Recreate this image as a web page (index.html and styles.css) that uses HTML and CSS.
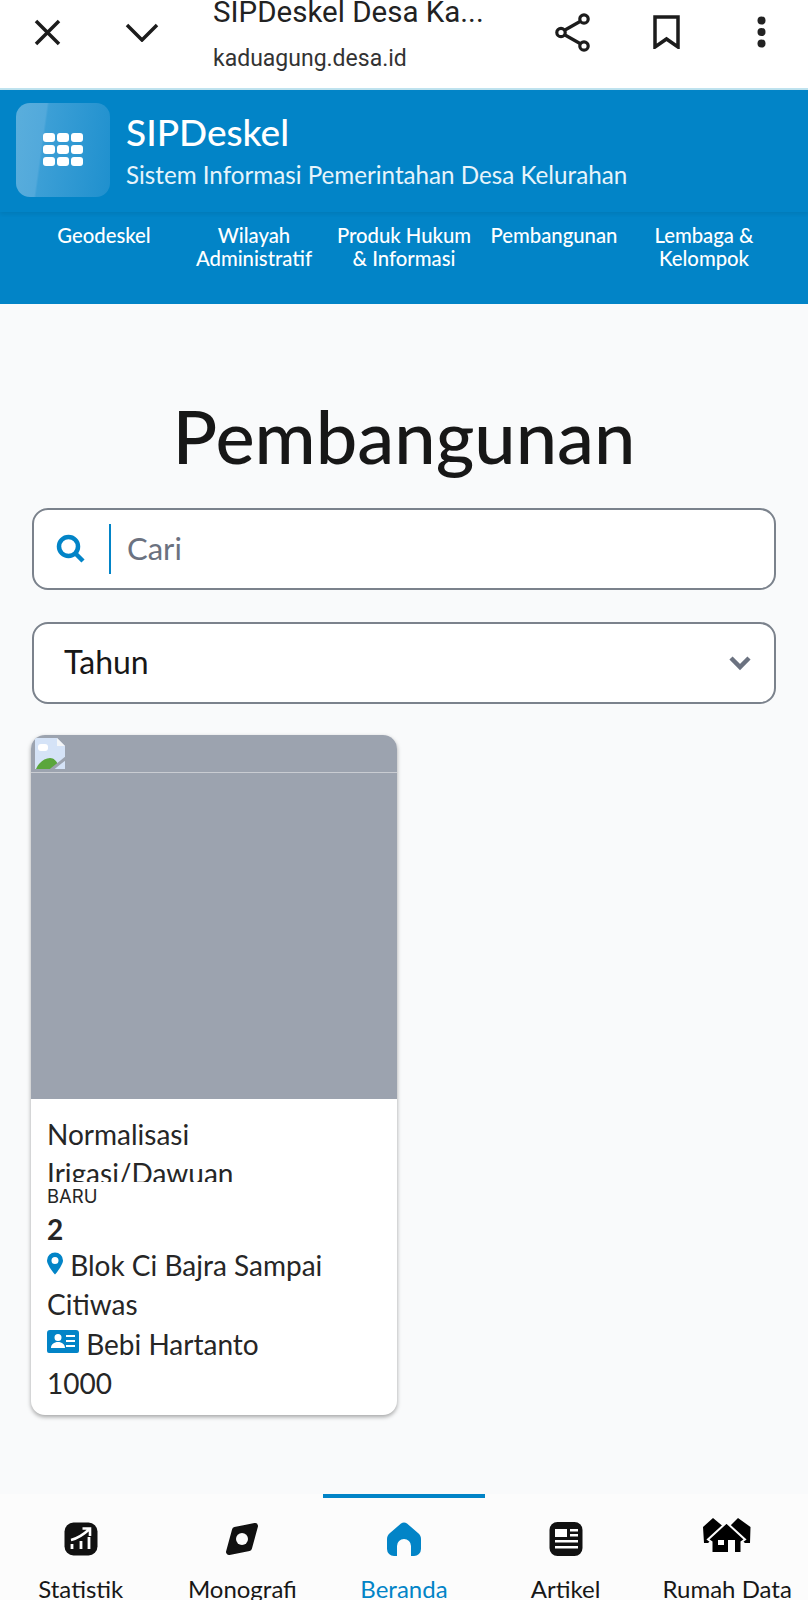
FILE: index.html
```html
<!DOCTYPE html>
<html lang="id">
<head>
    <meta charset="UTF-8">
    <meta name="viewport" content="width=device-width, initial-scale=1.0">
    <title>SIPDeskel - Pembangunan</title>
    <link rel="stylesheet" href="styles.css">
</head>
<body>
    <div class="screen">
        <div class="browser-bar">
            <svg class="bar-icon close-icon" viewBox="0 0 27 27"><path d="M2 2 25 25M25 2 2 25"/></svg>
            <svg class="bar-icon chevron-icon" viewBox="0 0 34 20"><path d="M2 3 17 18 32 3"/></svg>
            <div class="bar-title">
                <div class="bar-name">SIPDeskel Desa Ka...</div>
                <div class="bar-url">kaduagung.desa.id</div>
            </div>
            <svg class="bar-icon share-icon" viewBox="0 0 35 39"><circle cx="6" cy="19.500" r="4.200"/><circle cx="29" cy="6" r="4.200"/><circle cx="29" cy="33" r="4.200"/><path d="M10 17 25 8.500M10 22 25 30.500"/></svg>
            <svg class="bar-icon bookmark-icon" viewBox="0 0 27 34"><path d="M2 2H25V32L13.500 24 2 32Z"/></svg>
            <svg class="dots-icon" viewBox="0 0 9 32"><circle cx="4.500" cy="4.500" r="4"/><circle cx="4.500" cy="16" r="4"/><circle cx="4.500" cy="27.500" r="4"/></svg>
        </div>

        <div class="header">
            <div class="brand">
                <div class="logo">
                    <div class="logo-grid">
                        <span></span><span></span><span></span>
                        <span></span><span></span><span></span>
                        <span></span><span></span><span></span>
                    </div>
                </div>
                <div>
                    <div class="brand-name">SIPDeskel</div>
                    <div class="brand-sub">Sistem Informasi Pemerintahan Desa Kelurahan</div>
                </div>
            </div>
            <div class="menu">
                <div class="menu-item">Geodeskel</div>
                <div class="menu-item">Wilayah Administratif</div>
                <div class="menu-item">Produk Hukum &amp; Informasi</div>
                <div class="menu-item">Pembangunan</div>
                <div class="menu-item">Lembaga &amp; Kelompok</div>
            </div>
        </div>

        <div class="main">
            <h1>Pembangunan</h1>
            <div class="field search">
                <svg class="search-icon" viewBox="0 0 30 30"><circle cx="12.500" cy="12.500" r="9.500"/><path d="M19.500 19.500 27 27"/></svg>
                <span class="search-text">Cari</span>
            </div>
            <div class="field select">
                <span class="select-text">Tahun</span>
                <svg class="select-arrow" viewBox="0 0 24 16"><path d="M3 3 12 12 21 3"/></svg>
            </div>

            <div class="card">
                <div class="card-image">
                    <svg class="broken-image" viewBox="0 0 32 31">
                        <path d="M1 0H23L31 8V31H1Z" fill="#d5e3f7"/>
                        <path d="M23 0 31 8H23Z" fill="#f4f6f8"/>
                        <rect x="4" y="6" width="10" height="7" rx="3" fill="#fff"/>
                        <path d="M2 31C5 24 11 20 16 20 20 20 22 23 24 26L19 31Z" fill="#5aa63c"/>
                        <path d="M32 20 17 32" stroke="#9ca3af" stroke-width="3"/>
                    </svg>
                </div>
                <div class="card-body">
                    <div class="card-title">Normalisasi<br>Irigasi/Dawuan</div>
                    <div class="card-status">BARU</div>
                    <div class="card-count">2</div>
                    <div class="card-line">
                        <svg class="pin-icon" viewBox="0 0 16 22"><path fill-rule="evenodd" d="M8 0a8 8 0 0 0-8 8c0 3.500 4.500 10 8 14 3.500-4 8-10.500 8-14a8 8 0 0 0-8-8Zm0 4.500a3.500 3.500 0 1 1 0 7 3.500 3.500 0 0 1 0-7Z"/></svg>
                        Blok Ci Bajra Sampai Citiwas
                    </div>
                    <div class="card-line card-owner">
                        <svg class="id-icon" viewBox="0 0 32 24"><path fill-rule="evenodd" d="M3 0H29a3 3 0 0 1 3 3V21a2 2 0 0 1-2 2H2a2 2 0 0 1-2-2V3a3 3 0 0 1 3-3Zm8 4a3.500 3.500 0 1 0 0 7 3.500 3.500 0 0 0 0-7ZM4 18h14c0-3.500-3-6-7-6s-7 2.500-7 6ZM19 5v2h9V5Zm0 5v2h9v-2Zm0 5v2h9v-2Z"/></svg>
                        Bebi Hartanto
                    </div>
                    <div class="card-line">1000</div>
                </div>
            </div>
        </div>

        <div class="bottom-nav">
            <div class="nav-item">
                <svg class="nav-icon" viewBox="0 0 34 34"><rect x="0.500" y="0.500" width="33" height="33" rx="9" fill="#111"/><path d="M7 18C13 16.500 19 13 25 7.500M18.500 6.500H26V14" fill="none" stroke="#fff" stroke-width="2.600"/><path d="M8 27V22M17 27V19M25 27V15" stroke="#fff" stroke-width="2.800"/></svg>
                <span>Statistik</span>
            </div>
            <div class="nav-item">
                <svg class="nav-icon" viewBox="0 0 34 34"><path fill="#111" stroke="#111" stroke-width="6" stroke-linejoin="round" d="M10 8 30 4 24 26 4 30Z"/><circle cx="17" cy="17" r="6" fill="#fcfcfc"/></svg>
                <span>Monografi</span>
            </div>
            <div class="nav-item active">
                <svg class="nav-icon" viewBox="0 0 34 34"><path fill="#0284c7" d="M14 1.500c2-1.500 4-1.500 6 0L31 11c2 1.500 3 3.500 3 6V27a7 7 0 0 1-7 7H24V24a7 7 0 0 0-14 0V34H7a7 7 0 0 1-7-7V17c0-2.500 1-4.500 3-6Z"/></svg>
                <span>Beranda</span>
            </div>
            <div class="nav-item">
                <svg class="nav-icon" viewBox="0 0 34 34"><rect x="0.500" y="0" width="33" height="34" rx="8" fill="#111"/><path fill="#fff" d="M6 7h12v8H6ZM21 7h8v2.500h-8ZM21 12h8v2.500h-8ZM6 18h23v2.500H6ZM6 24h23v2.500H6Z"/></svg>
                <span>Artikel</span>
            </div>
            <div class="nav-item">
                <svg class="nav-icon wide" viewBox="0 0 48 34">
                    <path fill="#000" d="M0 9 10 0 22 10 5 25H1ZM47.500 9 35 0 25 10 42 25H47Z"/>
                    <path fill="#000" stroke="#fcfcfc" stroke-width="2" d="M23.500 4.500 42 21.500 38.500 24V35H8.500V24L5 21.500Z"/>
                    <path fill="#fcfcfc" d="M15 22h6v5h-6ZM25 22h7v12h-7Z"/>
                </svg>
                <span>Rumah Data</span>
            </div>
        </div>
    </div>
</body>
</html>
```

FILE: styles.css
```css
html, body {
    margin: 0;
    padding: 0;
}
body {
    font-family: 'Lato', 'Noto Sans', sans-serif;
    color: #171717;
    background-color: #f9fafb;
}
.screen {
    height: 1600px;
    overflow: hidden;
    display: flex;
    flex-direction: column;
}

/* browser bar */
.browser-bar {
    height: 88px;
    flex: none;
    background-color: #fff;
    display: flex;
    align-items: center;
    padding: 0 0 24px 34px;
    box-sizing: border-box;
    font-family: 'Roboto', sans-serif;
}
.bar-icon {
    fill: none;
    stroke: #1c1c1c;
    stroke-width: 3.500;
    flex: none;
}
.close-icon {
    width: 27px;
    height: 27px;
}
.chevron-icon {
    width: 34px;
    height: 20px;
    margin-left: 64px;
}
.bar-title {
    width: 330px;
    margin-left: 54px;
    align-self: flex-start;
    margin-top: -3px;
    white-space: nowrap;
}
.bar-name {
    font-size: 29.500px;
    line-height: 30px;
    color: #222;
}
.bar-url {
    font-size: 23px;
    line-height: 26px;
    margin-top: 19px;
    color: #333;
}
.share-icon {
    width: 35px;
    height: 39px;
    stroke-width: 3.200;
    margin-left: 12px;
}
.bookmark-icon {
    width: 27px;
    height: 34px;
    margin-left: 63px;
}
.dots-icon {
    width: 9px;
    height: 32px;
    fill: #222;
    margin-left: 77px;
}

/* header */
.header {
    flex: none;
    background-color: #0284c7;
    color: #fff;
    border-top: 2px solid #bfe3ef;
    height: 216px;
    box-sizing: border-box;
}
.brand {
    height: 122px;
    display: flex;
    align-items: center;
    padding: 0 0 3px 16px;
    box-sizing: border-box;
    box-shadow: 0 2px 4px rgba(0, 0, 0, 0.08);
}
.logo {
    width: 94px;
    height: 94px;
    border-radius: 14px;
    background: linear-gradient(98deg, #5aaedc 0%, #52a9db 29%, #3c9fd6 31%, #1f90ce 100%);
    display: flex;
    align-items: center;
    justify-content: center;
    margin-right: 16px;
}
.logo-grid {
    display: grid;
    grid-template-columns: repeat(3, 12px);
    grid-auto-rows: 9px;
    gap: 3px 2px;
}
.logo-grid span {
    background-color: #fff;
    border-radius: 3px;
}
.brand-name {
    font-size: 37px;
    line-height: 40px;
    font-weight: 500;
    margin-bottom: 8px;
    margin-top: 3px;
}
.brand-sub {
    font-size: 24.200px;
    line-height: 30px;
    color: #e6f4fb;
}
.menu {
    display: grid;
    grid-template-columns: repeat(5, 150px);
    padding: 12px 29px 0;
    font-size: 20.300px;
    line-height: 23px;
    text-align: center;
    font-weight: 500;
}
.menu-item {
    padding: 0 5px;
}

/* main */
.main {
    flex: 1;
    padding: 0 32px;
    overflow: hidden;
}
h1 {
    font-size: 74px;
    font-weight: 500;
    line-height: 88px;
    text-align: center;
    margin: 88px 0 28px;
}
.field {
    height: 82px;
    box-sizing: border-box;
    background-color: #fff;
    border: 2px solid #7b828c;
    border-radius: 16px;
    display: flex;
    align-items: center;
    font-size: 31px;
    margin-bottom: 32px;
}
.search-icon {
    width: 30px;
    height: 30px;
    fill: none;
    stroke: #0284c7;
    stroke-width: 4.500;
    margin-left: 22px;
    flex: none;
}
.search-text {
    color: #6b7280;
    border-left: 2px solid #0284c7;
    margin-left: 23px;
    padding-left: 16px;
    height: 50px;
    line-height: 48px;
}
.select {
    justify-content: space-between;
    padding: 0 22px 0 30px;
    color: #171717;
    font-size: 32px;
    margin-bottom: 31px;
}
.select-text {
    margin-top: -3px;
}
.select-arrow {
    width: 24px;
    height: 16px;
    fill: none;
    stroke: #6b7280;
    stroke-width: 4.500;
}

/* card */
.card {
    width: 366px;
    margin-left: -1px;
    background-color: #fff;
    border-radius: 14px;
    overflow: hidden;
    box-shadow: 0 2px 4px rgba(0, 0, 0, 0.35);
}
.card-image {
    height: 364px;
    background-color: #9ca3af;
    box-sizing: border-box;
}
.broken-image {
    display: block;
    width: 32px;
    height: 31px;
    margin-left: 3px;
    padding: 3px 0;
}
.card-image::after {
    content: '';
    display: block;
    height: 1px;
    background-color: #c9ccd2;
}
.card-body {
    padding: 16px 16px 12px;
    font-size: 28px;
    line-height: 39px;
    color: #262626;
}
.card-title {
    height: 67px;
    overflow: hidden;
}
.card-status {
    font-size: 18.500px;
    line-height: 24px;
    font-family: 'Inter', sans-serif;
    margin-top: 2px;
}
.card-count {
    font-weight: 700;
    line-height: 34px;
    margin-top: 4px;
}
.card-line {
    line-height: 39px;
}
.card-owner {
    margin-top: 1px;
}
.pin-icon {
    width: 16px;
    height: 23px;
    fill: #0284c7;
    vertical-align: 1px;
}
.id-icon {
    width: 32px;
    height: 24px;
    fill: #0284c7;
    vertical-align: 1px;
}

/* bottom nav */
.bottom-nav {
    flex: none;
    height: 106px;
    background-color: #fcfcfc;
    display: grid;
    grid-template-columns: repeat(5, 1fr);
}
.nav-item {
    display: flex;
    flex-direction: column;
    align-items: center;
    font-size: 24px;
    line-height: 30px;
    padding-top: 24px;
    box-sizing: border-box;
    white-space: nowrap;
    border-top: 4px solid transparent;
}
.nav-item span {
    margin-top: 18px;
}
.nav-item.active {
    color: #0284c7;
    border-top-color: #0284c7;
}
.nav-icon {
    width: 34px;
    height: 34px;
    flex: none;
}
.nav-icon.wide {
    width: 48px;
    height: 34px;
    margin-top: -4px;
    margin-bottom: 4px;
}
```
